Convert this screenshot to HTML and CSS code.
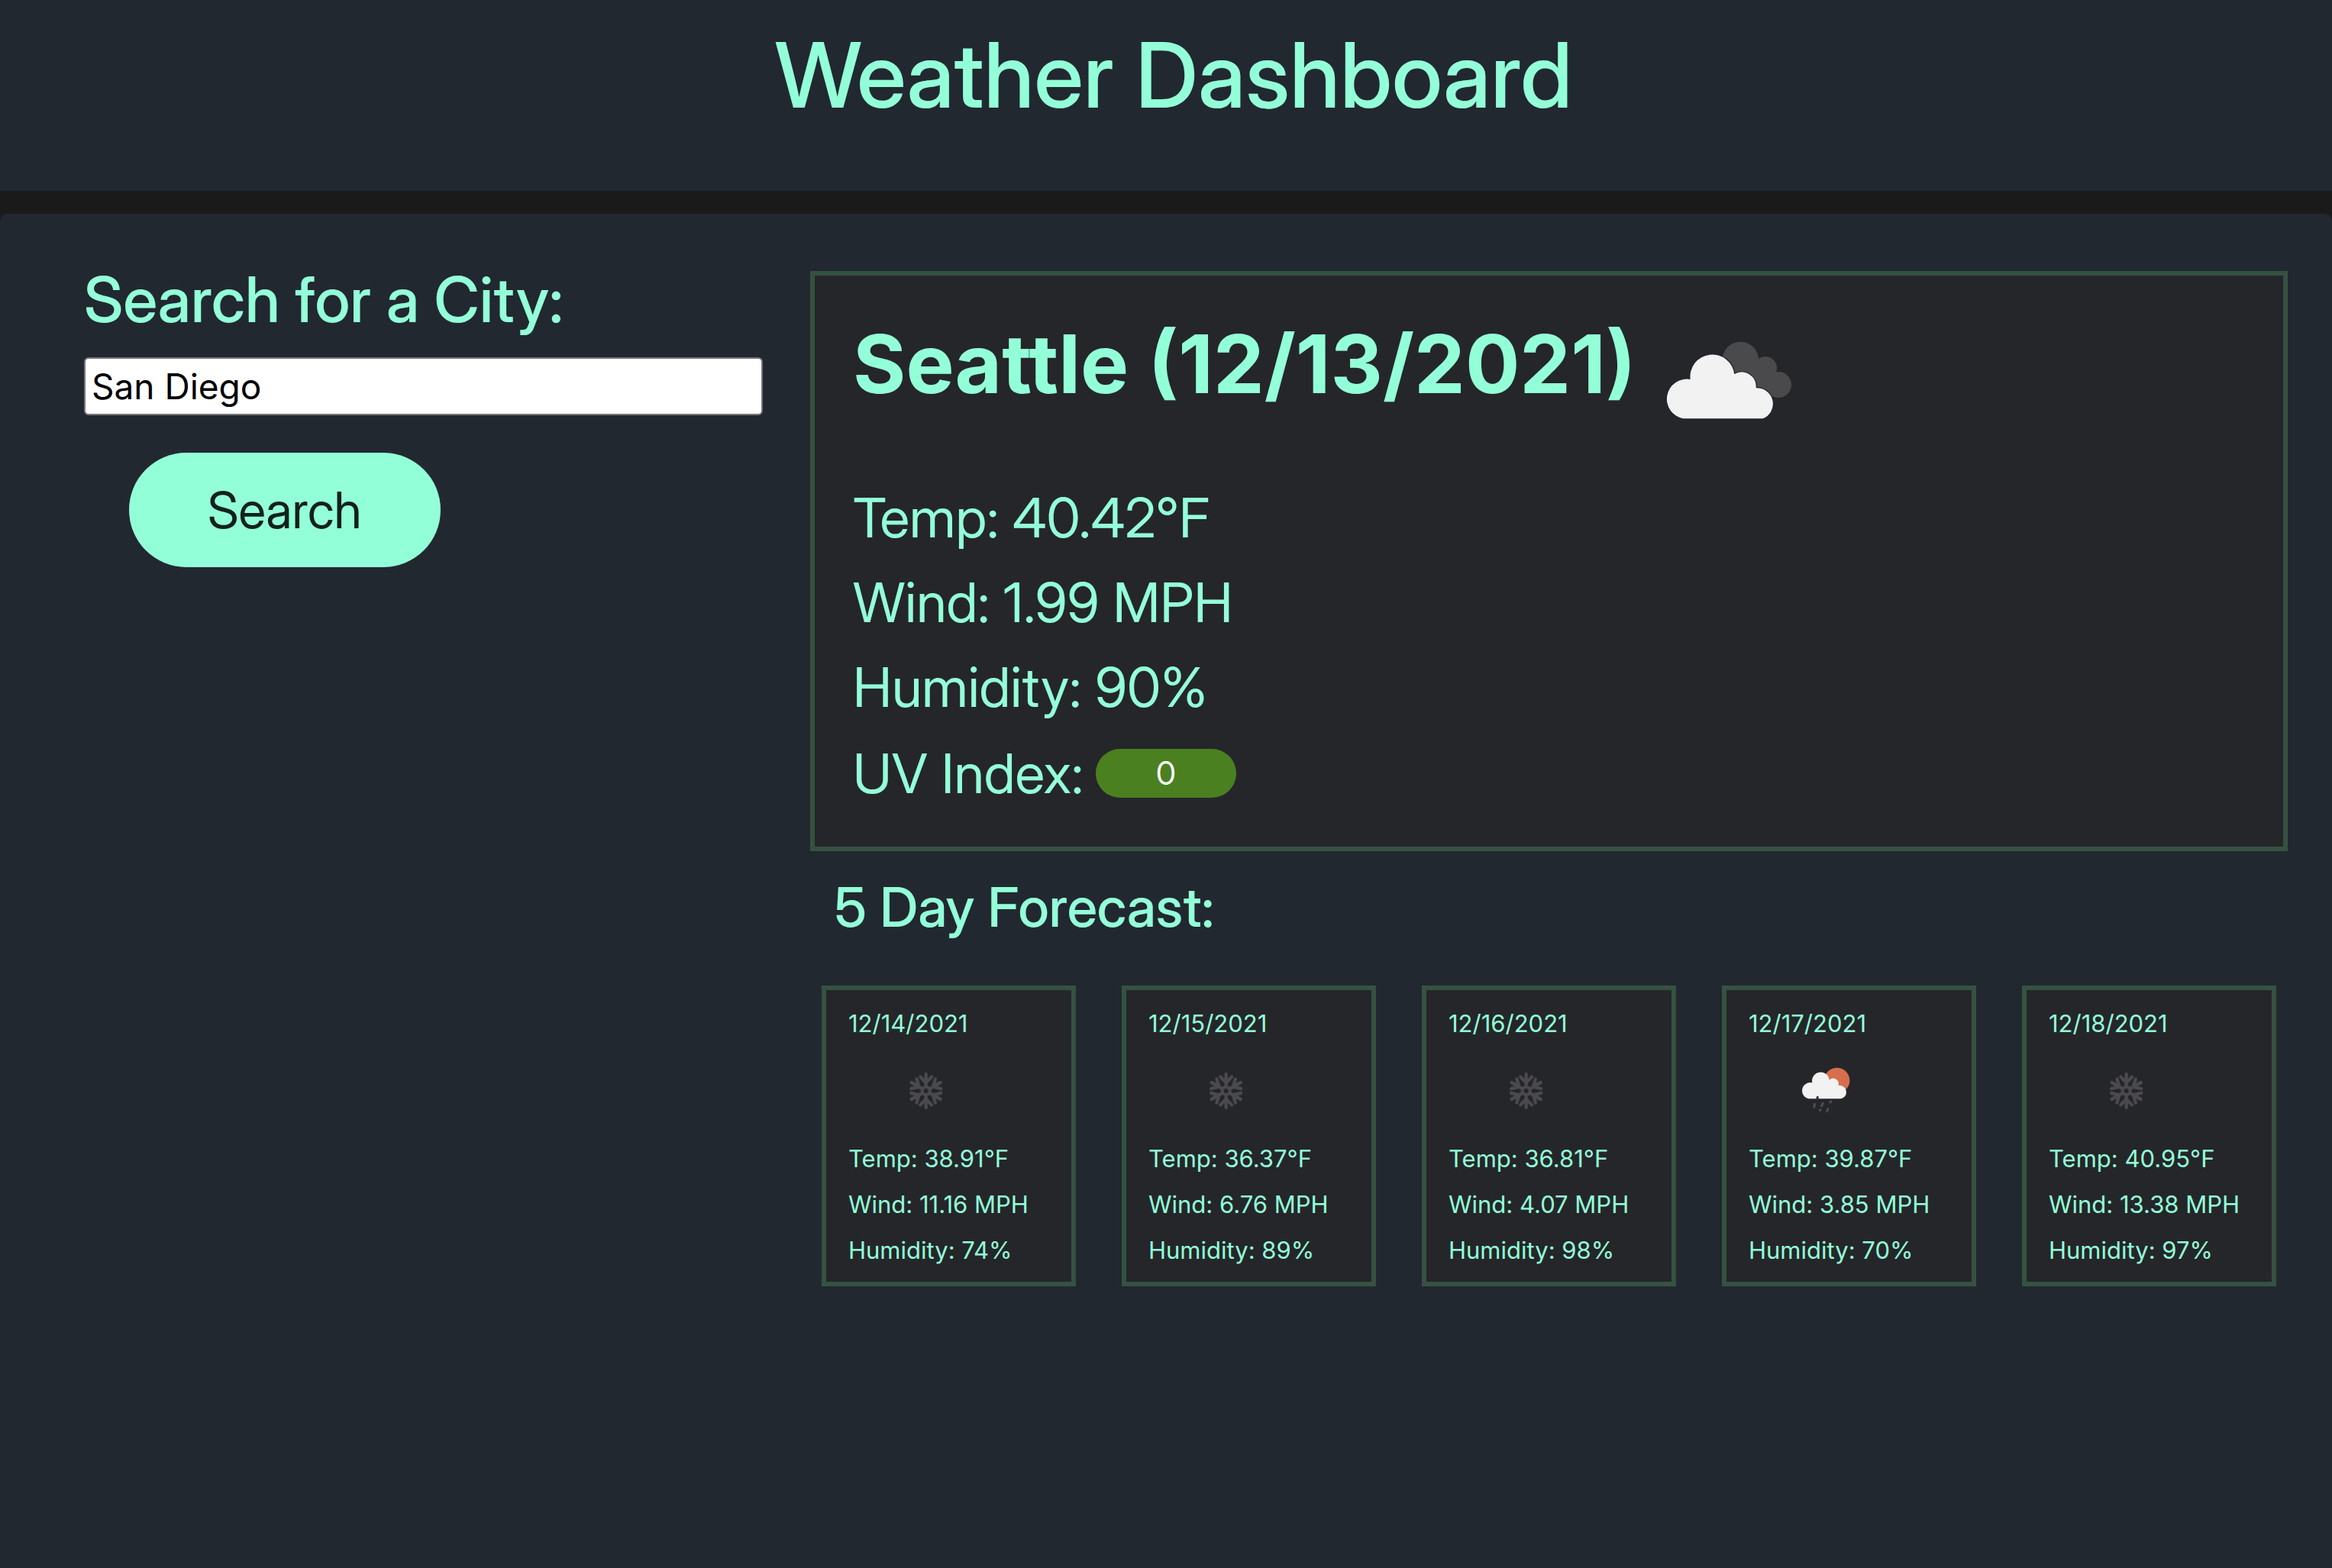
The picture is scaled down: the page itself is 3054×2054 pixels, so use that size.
FILE: index.html
```html
<!DOCTYPE html>
<html lang="en">
<head>
<meta charset="utf-8">
<title>Weather Dashboard</title>
<link rel="stylesheet" href="styles.css">
</head>
<body>
<svg class="sprite" aria-hidden="true">
  <symbol id="icon-snow" viewBox="6 -6 300 300">
    <g fill="none" stroke="#4a4a4d" stroke-width="13" stroke-linecap="round">
      <circle cx="155" cy="147" r="15" stroke-width="12"/>
      <g id="arm"><path d="M155 129V81M155 115L133 92M155 115L177 92"/></g>
      <use href="#arm" transform="rotate(60 155 147)"/>
      <use href="#arm" transform="rotate(120 155 147)"/>
      <use href="#arm" transform="rotate(180 155 147)"/>
      <use href="#arm" transform="rotate(240 155 147)"/>
      <use href="#arm" transform="rotate(300 155 147)"/>
    </g>
  </symbol>
</svg>

<header class="header">
  <h1 class="header__title">Weather Dashboard</h1>
</header>

<main class="main">
  <form class="search">
    <label class="search__label" for="city">Search for a City:</label>
    <input class="search__input" id="city" type="text" value="San Diego">
    <button class="search__button" type="button">Search</button>
  </form>

  <div class="results">
    <section class="current">
      <div class="current__head">
        <h2 class="current__title">Seattle (12/13/2021)</h2>
        <svg class="current__icon" viewBox="60 70 510 330" role="img" aria-label="Broken clouds">
          <g fill="#4a4a4c">
            <circle cx="355" cy="152" r="71"/>
            <circle cx="453" cy="184" r="45"/>
            <circle cx="504" cy="250" r="51"/>
            <path d="M330 170L450 150L504 230V300L400 280Z"/>
          </g>
          <path d="M130 383A78 78 0 0 1 158 229A86 86 0 1 1 331 208A57 57 0 0 1 416 263A62 62 0 0 1 442 383Z" fill="#f2f2f2" stroke="#25262a" stroke-width="8" paint-order="stroke"/>
        </svg>
      </div>
      <div class="current__stats">
        <p>Temp: 40.42°F</p>
        <p>Wind: 1.99 MPH</p>
        <p>Humidity: 90%</p>
        <p class="current__uv">UV Index: <span class="badge">0</span></p>
      </div>
    </section>

    <h3 class="forecast-title">5 Day Forecast:</h3>
    <div class="forecast">
      <article class="day">
        <h4 class="day__date">12/14/2021</h4>
        <svg class="day__icon" role="img" aria-label="Snow"><use href="#icon-snow"/></svg>
        <p>Temp: 38.91°F</p><p>Wind: 11.16 MPH</p><p>Humidity: 74%</p>
      </article>
      <article class="day">
        <h4 class="day__date">12/15/2021</h4>
        <svg class="day__icon" role="img" aria-label="Snow"><use href="#icon-snow"/></svg>
        <p>Temp: 36.37°F</p><p>Wind: 6.76 MPH</p><p>Humidity: 89%</p>
      </article>
      <article class="day">
        <h4 class="day__date">12/16/2021</h4>
        <svg class="day__icon" role="img" aria-label="Snow"><use href="#icon-snow"/></svg>
        <p>Temp: 36.81°F</p><p>Wind: 4.07 MPH</p><p>Humidity: 98%</p>
      </article>
      <article class="day">
        <h4 class="day__date">12/17/2021</h4>
        <svg class="day__icon" viewBox="3 -6 300 300" role="img" aria-label="Rain">
          <circle cx="194" cy="106" r="50" fill="#d66f4d"/>
          <path d="M90 178A32 32 0 1 1 97 115A34 34 0 1 1 164 104A22 22 0 0 1 200 126A26 26 0 0 1 209 178Z" fill="#f2f2f2"/>
          <path d="M107 199L104 210M138 196L134 206M170 189L167 192M128 222L128 224M159 218L155 227" fill="none" stroke="#4c4c4f" stroke-width="10" stroke-linecap="round"/>
          <path d="M118 172L116 180" stroke="#303033" stroke-width="9" stroke-linecap="round"/>
        </svg>
        <p>Temp: 39.87°F</p><p>Wind: 3.85 MPH</p><p>Humidity: 70%</p>
      </article>
      <article class="day">
        <h4 class="day__date">12/18/2021</h4>
        <svg class="day__icon" role="img" aria-label="Snow"><use href="#icon-snow"/></svg>
        <p>Temp: 40.95°F</p><p>Wind: 13.38 MPH</p><p>Humidity: 97%</p>
      </article>
    </div>
  </div>
</main>
</body>
</html>
```
FILE: styles.css
```css
:root {
  --mint: #93ffd8;
  --slate: #222830;
  --panel: #25262a;
  --edge: #355241;
  --display: "Inter Display", Inter, "Liberation Sans", sans-serif;
}

* {
  box-sizing: border-box;
}

body {
  display: flex;
  flex-direction: column;
  min-height: 100vh;
  margin: 0;
  background: #1b1a1a;
  color: var(--mint);
  font-family: Inter, "Liberation Sans", sans-serif;
}

h1, h2, h3, h4, p {
  margin: 0;
}

.sprite {
  position: absolute;
  width: 0;
  height: 0;
}

.header {
  padding: 28px 0 82px 20px;
  background: var(--slate);
  text-align: center;
}

.header__title {
  font-family: var(--display);
  font-size: 118px;
  font-weight: 500;
  line-height: 140px;
}

.main {
  display: grid;
  flex: 1;
  grid-template-columns: 889fr 1935fr;
  gap: 62px;
  align-items: start;
  margin-top: 30px;
  padding: 75px 58px 60px 110px;
  border-radius: 10px 10px 0 0;
  background: var(--slate);
}

.search {
  display: flex;
  flex-direction: column;
  align-items: flex-start;
}

.search__label {
  font-family: var(--display);
  font-size: 82px;
  font-weight: 500;
  line-height: 76px;
}

.search__input {
  width: 100%;
  height: 76px;
  margin-top: 37px;
  padding: 0 8px;
  border: 2px solid #76767a;
  border-radius: 6px;
  background: #fff;
  color: #000;
  font: 46px Inter, "Liberation Sans", sans-serif;
}

.search__button {
  margin: 49px 0 0 59px;
  padding: 35px 103px;
  border: 0;
  border-radius: 76px;
  background: var(--mint);
  color: #12211c;
  font: 66px/80px var(--display);
}

.current {
  padding: 52px 50px;
  border: 6px solid var(--edge);
  background: var(--panel);
}

.current__head {
  display: flex;
  align-items: flex-start;
  gap: 38px;
}

.current__title {
  font-size: 106px;
  font-weight: 700;
  line-height: 128px;
}

.current__icon {
  width: 170px;
  height: 110px;
  margin-top: 31px;
}

.current__stats {
  display: grid;
  gap: 27px;
  margin-top: 82px;
  font-family: var(--display);
  font-size: 72px;
  line-height: 84px;
}

.current__uv {
  display: flex;
  align-items: center;
  gap: 16px;
  line-height: 88px;
}

.badge {
  width: 184px;
  border-radius: 32px;
  background: #4a8020;
  color: #fff;
  font-size: 42px;
  line-height: 64px;
  text-align: center;
}

.forecast-title {
  margin: 31px 0 61px;
  padding-left: 32px;
  font-family: var(--display);
  font-size: 72px;
  font-weight: 500;
  line-height: 84px;
}

.forecast {
  display: grid;
  grid-template-columns: repeat(5, 1fr);
  gap: 60px;
  padding: 0 15px;
}

.day {
  padding: 26px 29px 23px;
  border: 6px solid var(--edge);
  background: var(--panel);
  font-size: 31px;
  line-height: 36px;
}

.day p + p {
  margin-top: 24px;
}

.day__date {
  font-size: 31px;
  font-weight: 400;
}

.day__icon {
  display: block;
  width: 100px;
  height: 100px;
  margin: 19px 0 22px 52px;
}
```
